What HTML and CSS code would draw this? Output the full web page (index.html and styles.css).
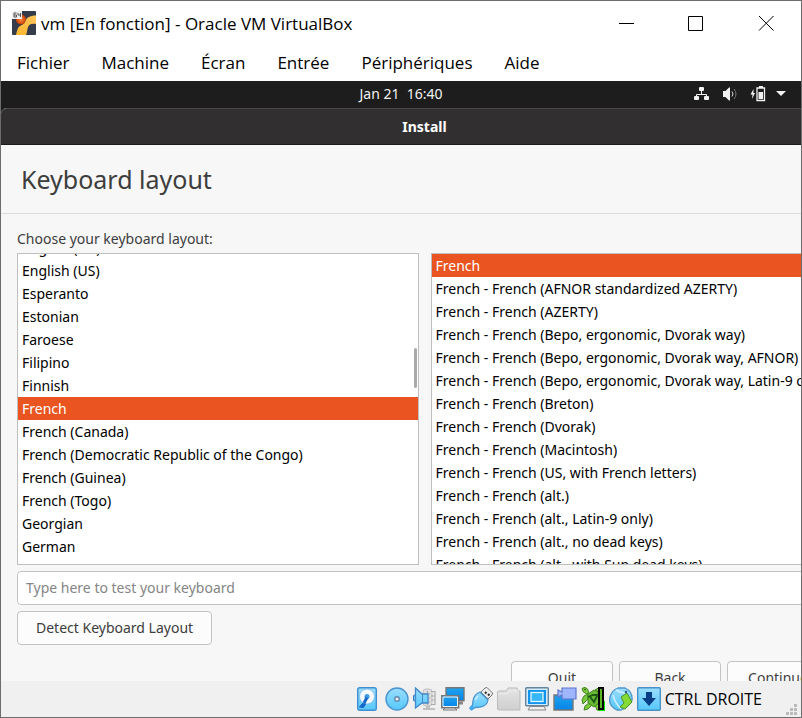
FILE: index.html
```html
<!DOCTYPE html>
<html lang="fr">
<head>
<meta charset="utf-8">
<title>vm [En fonction] - Oracle VM VirtualBox</title>
<link rel="stylesheet" href="styles.css">
</head>
<body>
<div class="window">
  <header class="titlebar">
    <svg class="app-icon" viewBox="0 0 24 24" aria-hidden="true">
      <defs>
        <linearGradient id="gold" x1="0" y1="1" x2="1" y2="0"><stop offset="0" stop-color="#ffb62e"/><stop offset="1" stop-color="#ffc65c"/></linearGradient>
        <radialGradient id="ball"><stop offset="0" stop-color="#ff8a35"/><stop offset="1" stop-color="#c93c08"/></radialGradient>
      </defs>
      <rect width="24" height="24" rx="1" fill="#343b49"/>
      <circle cx="9" cy="8.500" r="5" fill="url(#ball)"/>
      <path d="M24 4.500V13c-4-1-7 0-8 3-1 3-1 6-2 8H4c1-3 1-7 4-9 4-2 5-3 6-6 1-3 5-4.500 10-4.500z" fill="url(#gold)"/>
      <rect width="10" height="8" fill="#eee"/>
      <path d="M4.500 2H2v4h2.500V4H2M6 2v2h2.500M8.500 2v4" fill="none" stroke="#555"/>
    </svg>
    <h1 class="window-title">vm [En fonction] - Oracle VM VirtualBox</h1>
    <div class="window-controls">
      <button type="button" aria-label="Réduire"><svg viewBox="0 0 16 16"><path d="M1 8.500h15"/></svg></button>
      <button type="button" aria-label="Agrandir"><svg viewBox="0 0 16 16"><path d="M.5 1.500h14v14H.5z"/></svg></button>
      <button type="button" aria-label="Fermer"><svg viewBox="0 0 16 16"><path d="M1 1l14.500 14.500M15.500 1L1 15.500"/></svg></button>
    </div>
  </header>
  <nav class="menubar">
    <button type="button">Fichier</button>
    <button type="button">Machine</button>
    <button type="button">Écran</button>
    <button type="button">Entrée</button>
    <button type="button">Périphériques</button>
    <button type="button">Aide</button>
  </nav>

  <main class="guest" lang="en">
    <div class="panel">
      <time class="clock">Jan 21&nbsp; 16:40</time>
      <div class="tray">
        <svg viewBox="0 0 16 16" aria-hidden="true"><path d="M7.500 4v4M2.500 11V8.500h10V11" fill="none" stroke="#f2f2f2"/><rect x="5" y="1" width="5" height="4" rx="1"/><rect x="0" y="10" width="5" height="4" rx="1"/><rect x="10" y="10" width="5" height="4" rx="1"/></svg>
        <svg viewBox="0 0 16 16" aria-hidden="true"><path d="M1 5h2.500L7 1.500h1v13H7L3.500 11H1z"/><path d="M10 5.500q2 2.500 0 5" fill="none" stroke="#ddd"/><path d="M12 3q4 5 0 10" fill="none" stroke="#777"/></svg>
        <svg viewBox="0 0 16 16" aria-hidden="true"><path d="M3.500 3L.500 8.500h2l-.5 4.500 3-6H3.500z"/><path d="M7 2h7.500v12.500H7z" fill="none" stroke="#f2f2f2" stroke-width="1.300"/><path d="M9 0h4v2H9zM8.500 6H13v7H8.500z"/></svg>
        <svg class="caret" viewBox="0 0 10 6" aria-hidden="true"><path d="M0 0h10L5 5z"/></svg>
      </div>
    </div>

    <section class="installer">
      <div class="installer-bar">Install</div>
      <h2 class="page-title">Keyboard layout</h2>
      <form class="layout-form">
        <p class="prompt" id="prompt">Choose your keyboard layout:</p>
        <div class="lists">
          <div class="list">
            <ul class="layouts" role="listbox" aria-labelledby="prompt" tabindex="0">
              <li role="option" class="scrolled">English (UK)</li>
              <li role="option">English (US)</li>
              <li role="option">Esperanto</li>
              <li role="option">Estonian</li>
              <li role="option">Faroese</li>
              <li role="option">Filipino</li>
              <li role="option">Finnish</li>
              <li role="option" aria-selected="true">French</li>
              <li role="option">French (Canada)</li>
              <li role="option">French (Democratic Republic of the Congo)</li>
              <li role="option">French (Guinea)</li>
              <li role="option">French (Togo)</li>
              <li role="option">Georgian</li>
              <li role="option">German</li>
              <li role="option">German (Austria)</li>
            </ul>
            <span class="scroll-thumb"></span>
          </div>
          <div class="list">
            <ul class="layouts" role="listbox" aria-label="Variant" tabindex="0">
              <li role="option" aria-selected="true">French</li>
              <li role="option">French - French (AFNOR standardized AZERTY)</li>
              <li role="option">French - French (AZERTY)</li>
              <li role="option">French - French (Bepo, ergonomic, Dvorak way)</li>
              <li role="option">French - French (Bepo, ergonomic, Dvorak way, AFNOR)</li>
              <li role="option">French - French (Bepo, ergonomic, Dvorak way, Latin-9 only)</li>
              <li role="option">French - French (Breton)</li>
              <li role="option">French - French (Dvorak)</li>
              <li role="option">French - French (Macintosh)</li>
              <li role="option">French - French (US, with French letters)</li>
              <li role="option">French - French (alt.)</li>
              <li role="option">French - French (alt., Latin-9 only)</li>
              <li role="option">French - French (alt., no dead keys)</li>
              <li role="option">French - French (alt., with Sun dead keys)</li>
            </ul>
          </div>
        </div>
        <input class="test-input" type="text" placeholder="Type here to test your keyboard" aria-label="Type here to test your keyboard">
        <button class="btn detect" type="button">Detect Keyboard Layout</button>
        <div class="actions">
          <button class="btn" type="button">Quit</button>
          <button class="btn" type="button">Back</button>
          <button class="btn" type="button">Continue</button>
        </div>
      </form>
    </section>
  </main>

  <footer class="statusbar">
    <svg viewBox="0 0 24 24" aria-hidden="true">
      <defs>
        <linearGradient id="sky" x1="0" y1="0" x2="0" y2="1"><stop offset="0" stop-color="#9bddff"/><stop offset="1" stop-color="#55c8fb"/></linearGradient>
        <linearGradient id="screen" x1="0" y1="0" x2="0" y2="1"><stop offset="0" stop-color="#20a5ec"/><stop offset="1" stop-color="#0583ea"/></linearGradient>
        <linearGradient id="grey" x1="0" y1="0" x2="0" y2="1"><stop offset="0" stop-color="#e4e4e4"/><stop offset="1" stop-color="#cfcfcf"/></linearGradient>
      </defs>
      <rect x=".7" y=".7" width="18.600" height="22.600" rx="2" fill="url(#sky)" stroke="#3f8fd0" stroke-width="1.400"/>
      <circle cx="10" cy="9.500" r="7.500" fill="#f5faff" stroke="#7fb8e6" stroke-width=".8"/>
      <circle cx="10" cy="9.500" r="2.500" fill="#3f9ae4"/>
      <path d="M10 10.500L7 16" stroke="#1467c8" stroke-width="3"/>
      <path d="M2.500 20l3-3.500 3 .5-2 3.500z" fill="#1467c8" stroke="#1467c8"/>
    </svg>
    <svg viewBox="0 0 24 24" aria-hidden="true">
      <circle cx="12" cy="12" r="11" fill="url(#sky)" stroke="#4c94d0" stroke-width="1.400"/>
      <circle cx="12" cy="12" r="2.300" fill="#eee" stroke="#6288b0" stroke-width="1.400"/>
    </svg>
    <svg viewBox="0 0 24 24" aria-hidden="true">
      <rect x="10" y="2" width="9" height="17" rx="3" fill="#dedede" stroke="#bdbdbd"/>
      <path d="M18 4.500h4v13h-4M18 9h4M18 13h4M14.500 4v14M11 7h6M11 11h6M11 15h6" fill="none" stroke="#aaa" stroke-width="1.200"/>
      <path d="M13 19h4v2h5v2H10v-2h3z" fill="#c0c0c0"/>
      <path d="M.500 8.500l2-1v7l-2-1z" fill="#7acbf5" stroke="#3778be"/>
      <path d="M2.500 1L9 7h6v9H9l-6.500 5z" fill="url(#sky)" stroke="#4488cc" stroke-width="1.300"/>
      <path d="M9.500 7v9" stroke="#4488cc"/>
    </svg>
    <svg viewBox="0 0 24 24" aria-hidden="true">
      <path d="M5 .7h18v13H5z" fill="url(#screen)" stroke="#777" stroke-width="1.400"/>
      <path d="M16 16h6" stroke="#888" stroke-width="3"/>
      <path d="M.7 8.700h17v12h-17z" fill="url(#screen)" stroke="#777" stroke-width="1.400"/>
      <path d="M2 10h14.500v9.500H2z" fill="none" stroke="#f4f4f4"/>
      <path d="M4 21h10l2 2H2z" fill="#eee" stroke="#777"/>
    </svg>
    <svg viewBox="0 0 24 24" aria-hidden="true">
      <path d="M16 1l2-.5 5.500 5.500-.5 2-4 4-7-7z" fill="#eee" stroke="#777"/>
      <path d="M16 5l1.500 1.500M19 7l1.500 1.500" stroke="#333" stroke-width="2"/>
      <path d="M11 5l8 8q-1 6-8 7l-5 .5L2.500 23 1 21.500 3.500 18 4 14Q5 7 11 5z" fill="url(#sky)" stroke="#4c94d0" stroke-width="1.300"/>
      <path d="M9 9l-3 4" stroke="#c9efff" stroke-width="1.500"/>
      <circle cx="2.500" cy="21" r="2" fill="#3faaf0"/>
    </svg>
    <svg viewBox="0 0 24 24" aria-hidden="true">
      <path d="M.5 22V5l1-1H9l2-3h9l1 3h2v19H1.500z" fill="url(#grey)" stroke="#bbb"/>
      <path d="M1 7h9l3-3h9" fill="none" stroke="#eee"/>
    </svg>
    <svg viewBox="0 0 24 24" aria-hidden="true">
      <rect x=".7" y=".7" width="22.600" height="18" rx="1" fill="#d4ecfb" stroke="#65849d" stroke-width="1.400"/>
      <rect x="3" y="3" width="18" height="14" fill="#0e93ee"/>
      <rect x="6" y="5.500" width="12" height="9" fill="#36b7f7" stroke="#e2f6ff" stroke-width="1.300"/>
      <path d="M5 19.500h14l2 3.500H3z" fill="#eee" stroke="#888"/>
    </svg>
    <svg viewBox="0 0 24 24" aria-hidden="true">
      <path d="M1 8h19v15H1z" fill="url(#screen)" stroke="#777" stroke-width="1.400"/>
      <path d="M5 3l4 2V1h14v11H9V8l-4 2z" fill="#9fb6ff" stroke="#5f77cf" stroke-width="1.200"/>
    </svg>
    <svg viewBox="0 0 24 24" aria-hidden="true">
      <rect x="17" y="14" width="7" height="10" fill="#00f000"/>
      <g fill="#7ccb3f" stroke="#438620">
        <path d="M1 1.500Q4-1 6.500 2L8 6 5.500 7Q1 5 1 1.500z"/>
        <path d="M7 7Q2 8 1 13l1 4 5-5zM8 16l-4 3-1 4 4-1 4-4zM14 3q3-3 6-1v4zM14 18l2 5h3l-2-6z"/>
        <path d="M7 7l6-4 6 3v9l-6 5-6-4z" fill="#67b832"/>
      </g>
      <path d="M8.500 9l4.500 6 4-8M7 10l5-2 5 0" fill="none" stroke="#1c5a16" stroke-width="1.800"/>
      <circle cx="4" cy="2.500" r=".8" fill="#184b12"/>
      <rect x="18" y="1" width="4" height="21" fill="#59b625" stroke="#000" stroke-width="2"/>
    </svg>
    <svg viewBox="0 0 24 24" aria-hidden="true">
      <path d="M9 1h7q8 4 7 12-4 8-11 10H8Q-1 19 1 10 3 3 9 1z" fill="url(#sky)" stroke="#4d94c9" stroke-width="1.300"/>
      <path d="M7 3q5 4 12 2M4 8q2 8 8 14" fill="none" stroke="#d0f1ff" stroke-width="1.500"/>
      <path d="M12 10l6-4 5 9-7 7-5-2 4-4z" fill="#86da35" stroke="#4a9624"/>
      <circle cx="17" cy="5" r="1.300" fill="#255e8c"/>
    </svg>
    <svg viewBox="0 0 24 24" aria-hidden="true">
      <rect x=".7" y=".7" width="22.600" height="22.600" rx="1" fill="url(#sky)" stroke="#4792c7" stroke-width="1.400"/>
      <path d="M9 5h6v6h4l-7 8-7-8h4z" fill="#063d86"/>
    </svg>
    <span class="host-key">CTRL DROITE</span>
    <svg class="grip" viewBox="0 0 12 12" aria-hidden="true"><path d="M8 0h3v3H8zM4 4h3v3H4zM8 4h3v3H8zM0 8h3v3H0zM4 8h3v3H4zM8 8h3v3H8z" fill="#bbb"/></svg>
  </footer>
</div>
</body>
</html>
```
FILE: styles.css
```css
* {
  box-sizing: border-box;
}

body {
  margin: 0;
  font-family: "Open Sans", "Noto Sans", sans-serif;
  color: #000;
}

button,
input {
  font: inherit;
  color: inherit;
}

.window {
  display: flex;
  flex-direction: column;
  height: 100vh;
  border: 1px solid #6d6d6d;
  background: #fff;
  overflow: hidden;
}

/* Host window chrome */
.titlebar {
  display: flex;
  flex: none;
  align-items: center;
  height: 44px;
  padding-left: 11px;
  gap: 5px;
}

.app-icon {
  width: 24px;
  height: 24px;
}

.window-title {
  margin: 0;
  font-size: 17px;
  font-weight: 400;
  white-space: nowrap;
}

.window-controls {
  display: flex;
  height: 100%;
  margin-left: auto;
}

.window-controls button {
  width: 70px;
  padding: 0;
  border: 0;
  background: none;
}

.window-controls svg {
  display: block;
  width: 16px;
  height: 16px;
  margin: 0 auto;
  fill: none;
  stroke: #000;
}

.menubar {
  display: flex;
  flex: none;
  align-items: center;
  height: 36px;
  padding: 0 0 2px 16px;
  gap: 32px;
  font-size: 17px;
}

.menubar button {
  padding: 0;
  border: 0;
  background: none;
}

/* Guest display */
.guest {
  display: flex;
  flex: 1;
  flex-direction: column;
  min-height: 0;
  overflow: hidden;
  background: #1d1d1d;
  font-family: "Noto Sans", "Open Sans", sans-serif;
  font-size: 14px;
}

.panel {
  display: grid;
  flex: none;
  grid-template-columns: 1fr auto 1fr;
  align-items: center;
  height: 27px;
  padding: 0 15px 2px 0;
  color: #f2f2f2;
}

.clock {
  grid-column: 2;
  padding-left: 15px;
}

.tray {
  display: flex;
  align-items: center;
  justify-content: flex-end;
  gap: 12px;
}

.tray svg {
  width: 16px;
  height: 16px;
  fill: #f2f2f2;
}

.tray .caret {
  width: 10px;
  height: 6px;
  margin-left: -2px;
}

/* The installer is larger than the display and is cut at the right and bottom */
.installer {
  display: flex;
  flex: 1;
  flex-direction: column;
  min-height: 0;
  margin: 0 -47px -31px 0;
  border-radius: 6px 0 0;
  background: #f7f7f7;
  color: #3d3d3d;
}

.installer-bar {
  flex: none;
  height: 37px;
  border-top: 1px solid #484647;
  border-bottom: 1px solid #1c1b1c;
  border-radius: 6px 0 0;
  background: #322f30;
  color: #fff;
  font-weight: 700;
  line-height: 35px;
  text-align: center;
}

.page-title {
  flex: none;
  height: 69px;
  margin: 0;
  padding-left: 20px;
  border-bottom: 1px solid #dcdcdc;
  font-size: 25px;
  font-weight: 400;
  line-height: 68px;
}

.layout-form {
  display: flex;
  flex: 1;
  flex-direction: column;
  min-height: 0;
  padding: 15px 16px 17px;
}

.prompt {
  margin: 0 0 4px;
  line-height: 20px;
}

.lists {
  display: grid;
  flex: 1;
  grid-template-columns: 1fr 1fr;
  grid-template-rows: minmax(0, 1fr);
  gap: 12px;
  min-height: 0;
}

.list {
  position: relative;
  overflow: hidden;
  border: 1px solid #bfbfbf;
  background: #fff;
}

.layouts {
  height: 100%;
  margin: 0;
  padding: 0;
  overflow: hidden;
  color: #000;
  line-height: 23px;
  list-style: none;
  white-space: nowrap;
}

.layouts li {
  height: 23px;
  padding-left: 4px;
}

.layouts .scrolled {
  margin-top: -18px;
}

.layouts [aria-selected="true"] {
  background: #e95420;
  color: #fff;
}

.scroll-thumb {
  position: absolute;
  top: 94px;
  right: 1px;
  width: 3px;
  height: 40px;
  border-radius: 2px;
  background: #aaa;
}

.test-input {
  flex: none;
  height: 34px;
  margin-top: 6px;
  padding: 0 8px 2px;
  border: 1px solid #c3c3c3;
  border-radius: 4px;
  background: #fff;
}

.test-input::placeholder {
  color: #858585;
}

.btn {
  width: 102px;
  height: 34px;
  padding: 0 0 2px;
  border: 1px solid #c3c3c3;
  border-radius: 4px;
  background: #fcfcfc;
}

.detect {
  flex: none;
  width: auto;
  margin-top: 6px;
  padding: 0 18px 2px;
  align-self: flex-start;
}

.actions {
  display: flex;
  flex: none;
  justify-content: flex-end;
  gap: 6px;
  margin-top: 16px;
  padding-right: 3px;
}

/* Host status bar */
.statusbar {
  position: relative;
  display: flex;
  flex: none;
  align-items: center;
  justify-content: flex-end;
  height: 36px;
  padding-right: 39px;
  gap: 4px;
  background: #f0f0f0;
  font-size: 16px;
}

.statusbar svg {
  width: 24px;
  height: 24px;
}

.statusbar .grip {
  position: absolute;
  right: 3px;
  bottom: 1px;
  width: 12px;
  height: 12px;
}
```
